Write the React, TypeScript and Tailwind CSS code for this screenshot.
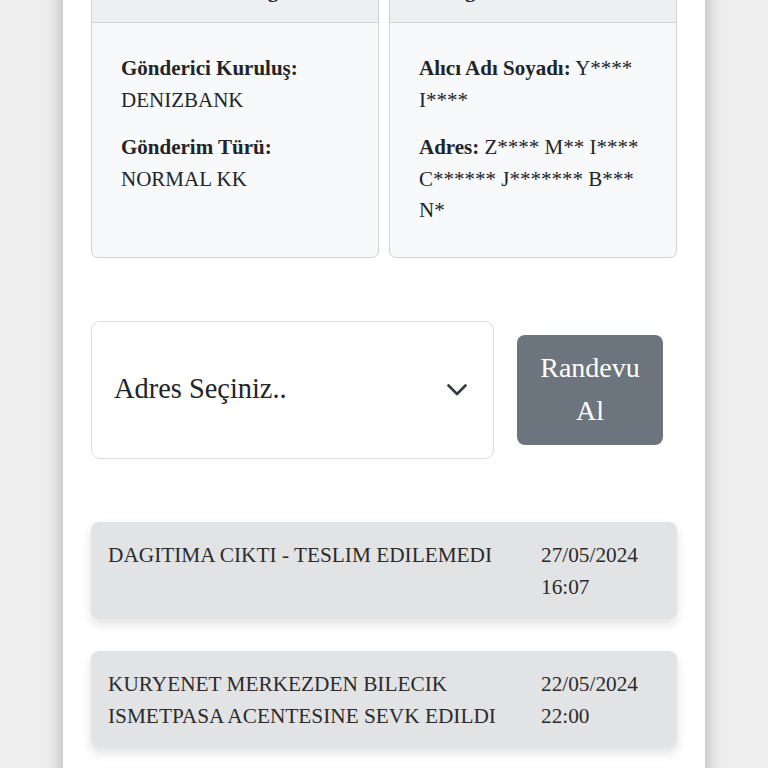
import React from "react";

const serif = { fontFamily: '"Liberation Serif", "Times New Roman", serif' };

function Card({ title, pad, children }: { title: string; pad: string; children: React.ReactNode }) {
  return (
    <div className="flex-1 flex flex-col rounded-[7px] border border-[#d0d1d3] bg-[#f8f9fa] overflow-hidden">
      <div className={"h-[56px] flex items-start pt-[8px] bg-[#eeeff1] border-b border-[#d0d1d3] text-[21px] font-bold text-[#212529] leading-[31.5px] " + pad}>
        {title}
      </div>
      <div className="flex-1 px-[29px] pt-[30px] pb-[30px] flex flex-col gap-[16px] text-[21px] leading-[31.5px] text-[#212529]">
        {children}
      </div>
    </div>
  );
}

export default function App() {
  return (
    <div className="min-h-screen bg-[#efefef] overflow-hidden" style={serif}>
      <div className="mx-auto w-[642px] min-h-screen bg-white shadow-[0_0_18px_rgba(0,0,0,0.28)] px-[28px] pb-10">
        <div className="-mt-[34px] flex gap-[10px]">
          <Card title="Gönderici Bilgileri" pad="pl-[55px]">
            <p>
              <b>Gönderici Kuruluş:</b>
              <br />
              DENIZBANK
            </p>
            <p>
              <b>Gönderim Türü:</b>
              <br />
              NORMAL KK
            </p>
          </Card>
          <Card title="Alıcı Bilgileri" pad="pl-[2px]">
            <p>
              <b>Alıcı Adı Soyadı:</b> Y**** I****
            </p>
            <p>
              <b>Adres:</b> Z**** M** I**** C****** J******* B*** N*
            </p>
          </Card>
        </div>

        <div className="mt-[63px] flex items-center">
          <div className="w-[403px] h-[138px] rounded-[9px] border border-[#dcdde0] bg-white flex items-center pl-[22px] pr-[26px]">
            <span className="flex-1 text-[28.4px] text-[#212529]">Adres Seçiniz..</span>
            <svg width="20" height="12" viewBox="0 0 20 12" fill="none">
              <path d="M1.5 1.5 L10 10 L18.5 1.5" stroke="#343a40" strokeWidth="2.6" strokeLinecap="round" strokeLinejoin="round" />
            </svg>
          </div>
          <button className="ml-[23px] w-[146px] h-[110px] rounded-[8px] bg-[#6c757d] text-white text-[28px] leading-[42.5px] px-[20px] text-center" style={serif}>
            Randevu Al
          </button>
        </div>

        <div className="mt-[63px] flex flex-col gap-[32px]">
          {[
            { d: "DAGITIMA CIKTI - TESLIM EDILEMEDI", t: "27/05/2024 16:07" },
            { d: "KURYENET MERKEZDEN BILECIK ISMETPASA ACENTESINE SEVK EDILDI", t: "22/05/2024 22:00" },
          ].map((it, i) => (
            <div
              key={i}
              className="rounded-[8px] bg-[#e2e3e5] shadow-[0_5px_12px_rgba(0,0,0,0.12)] px-[17px] pt-[17px] pb-[16px] flex text-[21.3px] leading-[32px] text-[#2b2b2b]"
            >
              <div className="w-[433px] pr-[14px]">{it.d}</div>
              <div className="w-[110px]">{it.t}</div>
            </div>
          ))}
        </div>
      </div>
    </div>
  );
}
